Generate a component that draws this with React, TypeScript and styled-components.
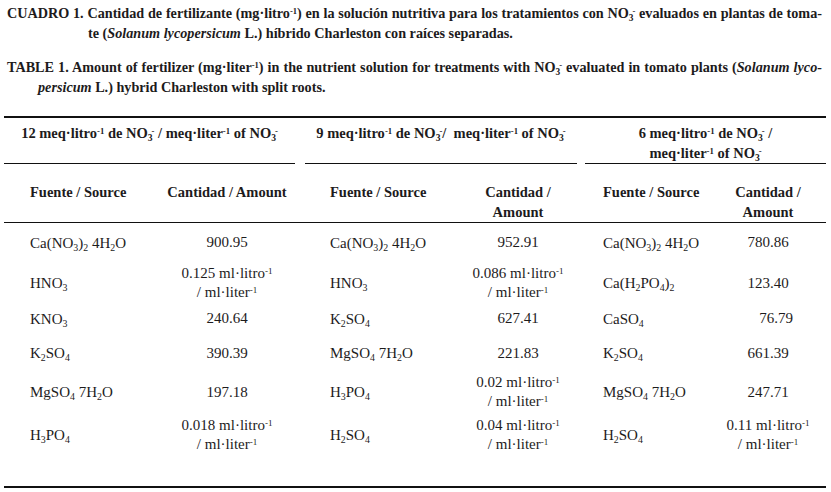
import React from 'react';
import styled, { createGlobalStyle } from 'styled-components';

const Global = createGlobalStyle`
  html, body { margin: 0; padding: 0; background: #ffffff; }
  body { font-family: "Liberation Serif", "Times New Roman", serif; color: #1d1b1c; }
`;

const Page = styled.div`
  width: 831px;
  height: 492px;
  box-sizing: border-box;
  padding: 3px 5px 0 4px;
  overflow: hidden;
`;

const Caption = styled.div<{ $gap: number }>`
  font-weight: bold;
  font-size: 14.2px;
  line-height: 20px;
  padding-left: 3px;
  width: 815px;
  margin-bottom: ${(p) => p.$gap}px;
`;

const CapFirst = styled.div`
  text-align: justify;
  text-align-last: justify;
  white-space: nowrap;
`;

const CapRest = styled.div<{ $indent: number }>`
  padding-left: ${(p) => p.$indent}px;
`;

const Sub = styled.sub`
  font-size: 0.66em;
  line-height: 0;
  vertical-align: -0.3em;
`;

const Sup = styled.sup<{ $over?: boolean }>`
  font-size: 0.6em;
  line-height: 0;
  vertical-align: 0.45em;
  margin-left: ${(p) => (p.$over ? '-0.12em' : '0')};
`;

const TableFrame = styled.div`
  width: 822px;
  border-top: 2px solid #111;
  border-bottom: 2px solid #111;
  padding-bottom: 27px;
`;

const Grid = styled.div`
  display: grid;
  grid-template-columns: 152px 142px 157px 126px 129px 116px;
  grid-template-rows: auto auto 39px 42px 29px 40px 38px 48px;
  align-items: center;
`;

const GroupHead = styled.div<{ $ml: number; $mr: number }>`
  grid-column: span 2;
  align-self: stretch;
  margin: 0 ${(p) => p.$mr}px 0 ${(p) => p.$ml}px;
  border-bottom: 1px solid #111;
  padding-top: 5px;
  text-align: center;
  font-weight: bold;
  font-size: 14.5px;
  line-height: 20px;
`;

const ColHead = styled.div<{ $center?: boolean; $pl?: number }>`
  align-self: stretch;
  border-bottom: 1px solid #111;
  padding-top: 18px;
  padding-left: ${(p) => p.$pl ?? 0}px;
  text-align: ${(p) => (p.$center ? 'center' : 'left')};
  font-weight: bold;
  font-size: 14.5px;
  line-height: 20px;
`;

const SourceCell = styled.div<{ $pl: number }>`
  padding-left: ${(p) => p.$pl}px;
  font-size: 15px;
  line-height: 20px;
  white-space: nowrap;
`;

const AmountCell = styled.div<{ $shift?: number }>`
  text-align: center;
  font-size: 15px;
  line-height: 19px;
  white-space: nowrap;
  padding-left: ${(p) => p.$shift ?? 0}px;
`;

const Ion = () => (
  <>
    NO<Sub>3</Sub>
    <Sup $over>-</Sup>
  </>
);

const Formula = ({ f }: { f: string }) => {
  const parts = f.split(/_(\d)/);
  return (
    <>
      {parts.map((p, i) => (i % 2 === 1 ? <Sub key={i}>{p}</Sub> : <React.Fragment key={i}>{p}</React.Fragment>))}
    </>
  );
};

type Amount = { v: string; ml?: boolean; shift?: number };

const AmountText = ({ a }: { a: Amount }) =>
  a.ml ? (
    <>
      {a.v} ml·litro<Sup>-1</Sup>
      <br />/ ml·liter<Sup>-1</Sup>
    </>
  ) : (
    <>{a.v}</>
  );

type Row = [string, Amount, string, Amount, string, Amount];

const rows: Row[] = [
  ['Ca(NO_3)_2 4H_2O', { v: '900.95' }, 'Ca(NO_3)_2 4H_2O', { v: '952.91' }, 'Ca(NO_3)_2 4H_2O', { v: '780.86' }],
  ['HNO_3', { v: '0.125', ml: true }, 'HNO_3', { v: '0.086', ml: true }, 'Ca(H_2PO_4)_2', { v: '123.40' }],
  ['KNO_3', { v: '240.64' }, 'K_2SO_4', { v: '627.41' }, 'CaSO_4', { v: '76.79', shift: 16 }],
  ['K_2SO_4', { v: '390.39' }, 'MgSO_4 7H_2O', { v: '221.83' }, 'K_2SO_4', { v: '661.39' }],
  ['MgSO_4 7H_2O', { v: '197.18' }, 'H_3PO_4', { v: '0.02', ml: true }, 'MgSO_4 7H_2O', { v: '247.71' }],
  ['H_3PO_4', { v: '0.018', ml: true }, 'H_2SO_4', { v: '0.04', ml: true }, 'H_2SO_4', { v: '0.11', ml: true }],
];

const sourcePad = [26, 32, 22];

export default function App() {
  return (
    <Page>
      <Global />
      <Caption $gap={14}>
        <CapFirst>
          CUADRO 1. Cantidad de fertilizante (mg·litro<Sup>-1</Sup>) en la solución nutritiva para los tratamientos con <Ion /> evaluados en plantas de toma-
        </CapFirst>
        <CapRest $indent={81}>
          te (<i>Solanum lycopersicum</i> L.) híbrido Charleston con raíces separadas.
        </CapRest>
      </Caption>
      <Caption $gap={19}>
        <CapFirst>
          TABLE 1. Amount of fertilizer (mg·liter<Sup>-1</Sup>) in the nutrient solution for treatments with <Ion /> evaluated in tomato plants (<i>Solanum lyco-</i>
        </CapFirst>
        <CapRest $indent={31}>
          <i>persicum</i> L.) hybrid Charleston with split roots.
        </CapRest>
      </Caption>
      <TableFrame>
        <Grid>
          <GroupHead $ml={0} $mr={3}>
            12 meq·litro<Sup>-1</Sup> de <Ion /> / meq·liter<Sup>-1</Sup> of <Ion />
          </GroupHead>
          <GroupHead $ml={7} $mr={4}>
            9 meq·litro<Sup>-1</Sup> de <Ion />/&nbsp; meq·liter<Sup>-1</Sup> of <Ion />
          </GroupHead>
          <GroupHead $ml={4} $mr={0}>
            6 meq·litro<Sup>-1</Sup> de <Ion /> /
            <br />
            meq·liter<Sup>-1</Sup> of <Ion />
          </GroupHead>

          <ColHead $pl={26}>Fuente / Source</ColHead>
          <ColHead $center>Cantidad / Amount</ColHead>
          <ColHead $pl={32}>Fuente / Source</ColHead>
          <ColHead $center>
            Cantidad /<br />
            Amount
          </ColHead>
          <ColHead $pl={22}>Fuente / Source</ColHead>
          <ColHead $center>
            Cantidad /<br />
            Amount
          </ColHead>

          {rows.map((r, ri) =>
            [0, 1, 2].map((g) => (
              <React.Fragment key={`${ri}-${g}`}>
                <SourceCell $pl={sourcePad[g]}>
                  <Formula f={r[g * 2] as string} />
                </SourceCell>
                <AmountCell $shift={(r[g * 2 + 1] as Amount).shift}>
                  <AmountText a={r[g * 2 + 1] as Amount} />
                </AmountCell>
              </React.Fragment>
            ))
          )}
        </Grid>
      </TableFrame>
    </Page>
  );
}
